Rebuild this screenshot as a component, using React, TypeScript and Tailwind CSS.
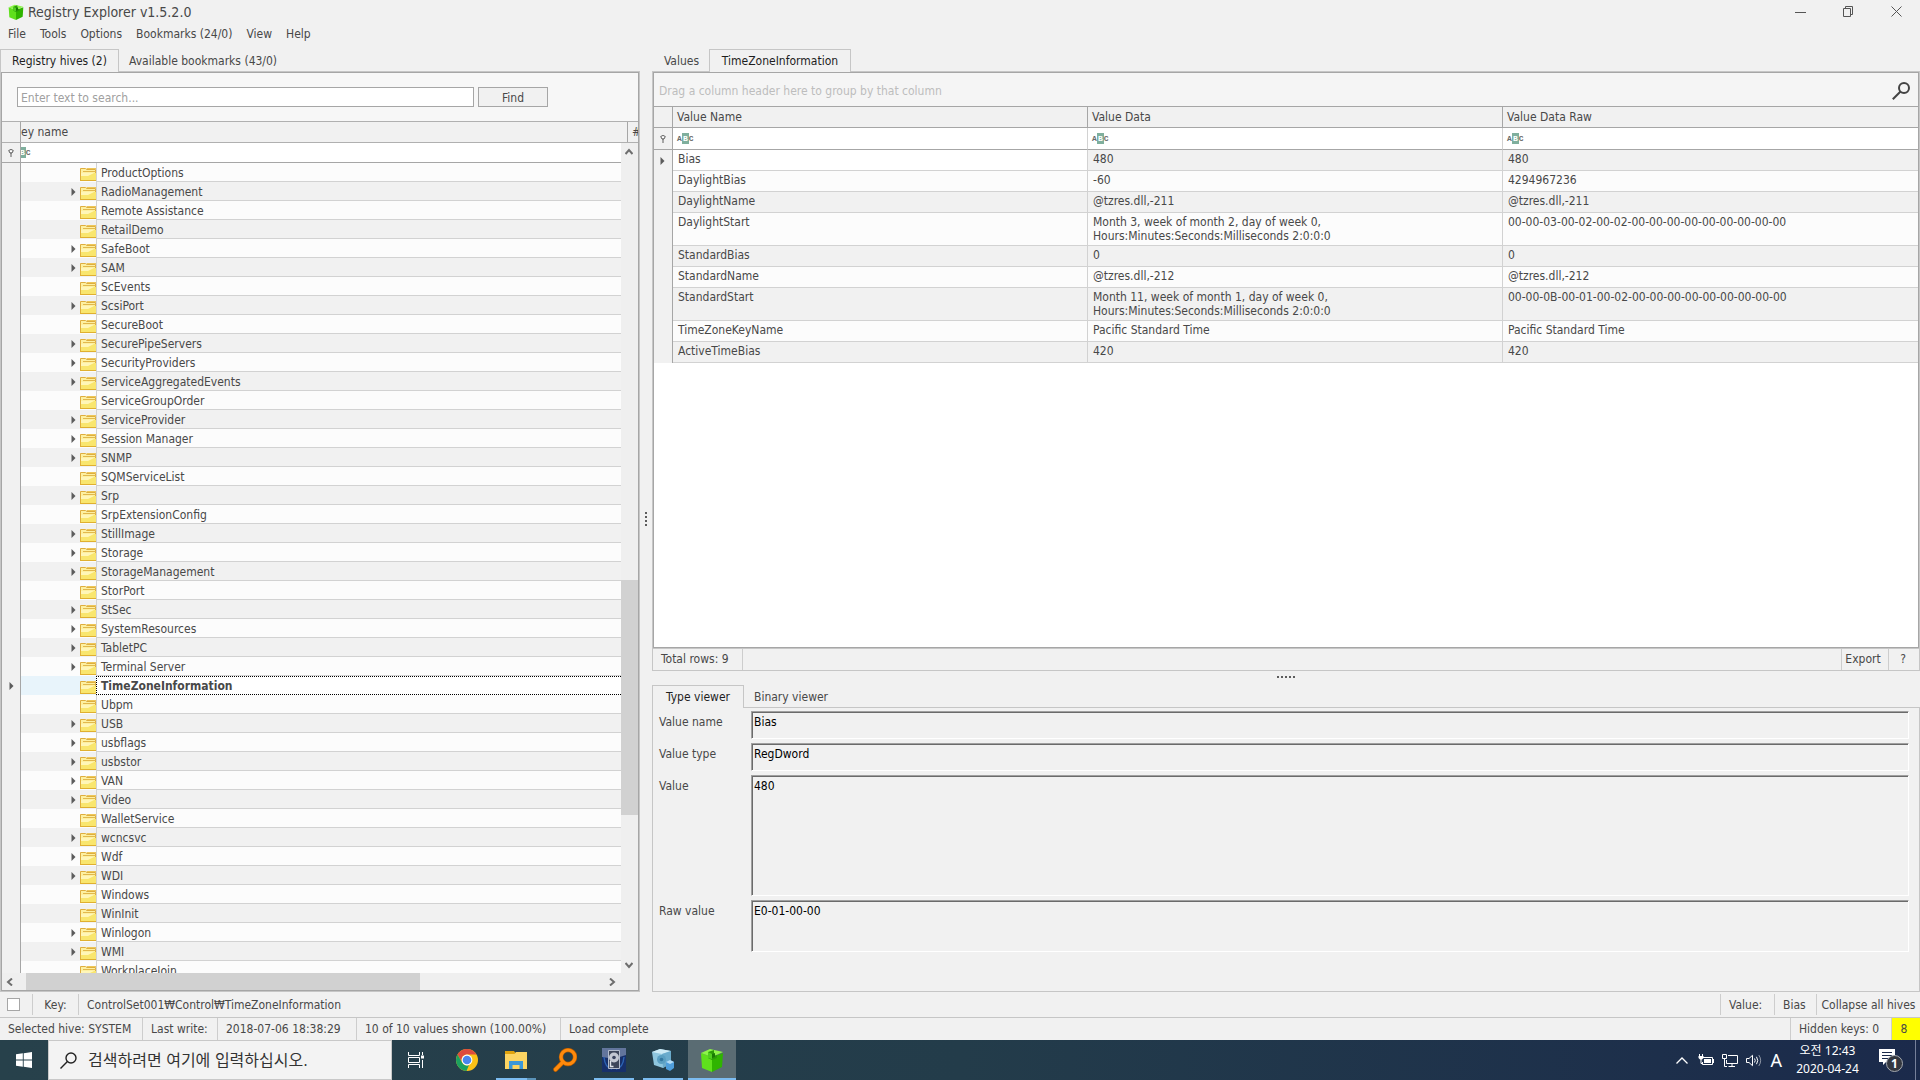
import type { ReactNode } from 'react'

type TreeKey = { name: string; hasChildren?: boolean; selected?: boolean }

const treeKeys: TreeKey[] = [
  { name: 'ProductOptions' },
  { name: 'RadioManagement', hasChildren: true },
  { name: 'Remote Assistance' },
  { name: 'RetailDemo' },
  { name: 'SafeBoot', hasChildren: true },
  { name: 'SAM', hasChildren: true },
  { name: 'ScEvents' },
  { name: 'ScsiPort', hasChildren: true },
  { name: 'SecureBoot' },
  { name: 'SecurePipeServers', hasChildren: true },
  { name: 'SecurityProviders', hasChildren: true },
  { name: 'ServiceAggregatedEvents', hasChildren: true },
  { name: 'ServiceGroupOrder' },
  { name: 'ServiceProvider', hasChildren: true },
  { name: 'Session Manager', hasChildren: true },
  { name: 'SNMP', hasChildren: true },
  { name: 'SQMServiceList' },
  { name: 'Srp', hasChildren: true },
  { name: 'SrpExtensionConfig' },
  { name: 'StillImage', hasChildren: true },
  { name: 'Storage', hasChildren: true },
  { name: 'StorageManagement', hasChildren: true },
  { name: 'StorPort' },
  { name: 'StSec', hasChildren: true },
  { name: 'SystemResources', hasChildren: true },
  { name: 'TabletPC', hasChildren: true },
  { name: 'Terminal Server', hasChildren: true },
  { name: 'TimeZoneInformation', selected: true },
  { name: 'Ubpm' },
  { name: 'USB', hasChildren: true },
  { name: 'usbflags', hasChildren: true },
  { name: 'usbstor', hasChildren: true },
  { name: 'VAN', hasChildren: true },
  { name: 'Video', hasChildren: true },
  { name: 'WalletService' },
  { name: 'wcncsvc', hasChildren: true },
  { name: 'Wdf', hasChildren: true },
  { name: 'WDI', hasChildren: true },
  { name: 'Windows' },
  { name: 'WinInit' },
  { name: 'Winlogon', hasChildren: true },
  { name: 'WMI', hasChildren: true },
  { name: 'WorkplaceJoin' },
]

const columns = ['Value Name', 'Value Data', 'Value Data Raw']

const values = [
  ['Bias', '480', '480'],
  ['DaylightBias', '-60', '4294967236'],
  ['DaylightName', '@tzres.dll,-211', '@tzres.dll,-211'],
  [
    'DaylightStart',
    'Month 3, week of month 2, day of week 0,\nHours:Minutes:Seconds:Milliseconds 2:0:0:0',
    '00-00-03-00-02-00-02-00-00-00-00-00-00-00-00-00',
  ],
  ['StandardBias', '0', '0'],
  ['StandardName', '@tzres.dll,-212', '@tzres.dll,-212'],
  [
    'StandardStart',
    'Month 11, week of month 1, day of week 0,\nHours:Minutes:Seconds:Milliseconds 2:0:0:0',
    '00-00-0B-00-01-00-02-00-00-00-00-00-00-00-00-00',
  ],
  ['TimeZoneKeyName', 'Pacific Standard Time', 'Pacific Standard Time'],
  ['ActiveTimeBias', '420', '420'],
]

/* ---------- icons ---------- */

function CubeIcon({ className }: { className: string }) {
  return (
    <svg viewBox="0 0 24 24" className={className} aria-hidden="true">
      <path d="M1 5 L12 9 V24 L2 20 Z" fill="#5fe01c" />
      <path d="M12 9 L23 5 L22 19 L12 24 Z" fill="#2fb400" />
      <path d="M1 5 L10 1 L23 4 L12 9 Z" fill="#8cf548" />
      <path d="M8 4 L14 2 V8 L17 7 V10 L12 12 L8 10 Z" fill="#2a9a08" />
      <path d="M8 4 L12 6 V11 L8 10 Z" fill="#50cf1e" />
      <path d="M12 6 L15 5 V9 L12 10 Z" fill="#187a04" />
    </svg>
  )
}

function FolderIcon() {
  return (
    <svg viewBox="0 0 16 14" className="h-3.5 w-4 shrink-0" aria-hidden="true">
      <path d="M0.5 13.5 V1.5 H5.5 L6.5 2.5 H15.5 V13.5 Z" fill="#fdf0a0" stroke="#dfae3e" />
      <path d="M6.5 1.5 H16" stroke="#edc75a" />
      <path d="M3 4.5 H16" stroke="#e2b84c" />
      <path d="M1 6 H16 V13 H1 Z" fill="#f9e66e" />
      <path d="M1 6 H14 L8 9 H1 Z" fill="#fff6b8" />
      <path d="M0 13.5 H16" stroke="#e0b030" />
    </svg>
  )
}

function RowArrow() {
  return (
    <svg viewBox="0 0 5 8" className="h-2 w-[5px]" aria-hidden="true">
      <path d="M0.5 0 L4.5 4 L0.5 8 Z" fill="#5c5c5c" />
    </svg>
  )
}

function PinIcon() {
  return (
    <svg viewBox="0 0 6 8" className="h-2 w-1.5" aria-hidden="true">
      <path d="M0.7 1.5 Q3 -0.6 5.3 1.5 L4 4 H2 Z" fill="#fff" stroke="#5c5c5c" />
      <path d="M3 3.5 V8" stroke="#5c5c5c" />
    </svg>
  )
}

function AbcIcon() {
  return (
    <span className="flex h-[11px] shrink-0 items-center font-['Liberation_Mono',monospace] text-[8px] leading-none font-bold text-[#6a6a6a]">
      <span>A</span>
      <span className="flex h-[11px] w-[7px] items-center justify-center bg-[#7faf9d] text-white">B</span>
      <span>C</span>
    </span>
  )
}

function Chevron({ d }: { d: string }) {
  return (
    <svg viewBox="0 0 8 8" className="h-2 w-2" aria-hidden="true">
      <path d={d} fill="none" stroke="#6e6e6e" strokeWidth="2" />
    </svg>
  )
}

/* ---------- shared pieces ---------- */

function Tab({ children, active, className }: { children: ReactNode; active?: boolean; className: string }) {
  return (
    <button
      type="button"
      role="tab"
      aria-selected={!!active}
      className={`relative -mb-px h-[23px] whitespace-nowrap ${
        active ? 'border border-b-0 border-[#c6c6c6] bg-[#f1f1f1] text-[#1e1e1e]' : ''
      } ${className}`}
    >
      {children}
    </button>
  )
}

function Divider() {
  return <span className="w-px self-stretch bg-[#cdcdcd]" />
}

function Field({ id, label, value, className }: { id: string; label: string; value: string; className: string }) {
  return (
    <div className="flex">
      <label htmlFor={id} className="w-[92px] shrink-0 pt-1">
        {label}
      </label>
      <textarea
        id={id}
        readOnly
        defaultValue={value}
        className={`block min-w-0 flex-1 resize-none border border-t-[#a0a0a0] border-r-white border-b-white border-l-[#a0a0a0] bg-[#f1f1f1] px-0.5 pt-[3px] text-black inset-shadow-[1px_1px_0_#6b6b6b] outline-none ${className}`}
      />
    </div>
  )
}

/* ---------- window ---------- */

function TitleBar() {
  return (
    <header className="flex h-[23px] items-center pl-2">
      <CubeIcon className="h-4 w-4" />
      <h1 className="ml-1 flex-1 text-[14px]">Registry Explorer v1.5.2.0</h1>
      <button type="button" aria-label="Minimize" className="flex h-6 w-12 items-center justify-center">
        <svg viewBox="0 0 11 11" className="h-[11px] w-[11px]">
          <path d="M0 6.5 H11" stroke="#555" />
        </svg>
      </button>
      <button type="button" aria-label="Restore" className="flex h-6 w-12 items-center justify-center">
        <svg viewBox="0 0 11 11" className="h-[11px] w-[11px]" fill="none" stroke="#555">
          <path d="M0.5 2.5 H7.5 V10.5 H0.5 Z M2.5 2.5 V0.5 H9.5 V8.5 H7.5" />
        </svg>
      </button>
      <button type="button" aria-label="Close" className="flex h-6 w-12 items-center justify-center">
        <svg viewBox="0 0 11 11" className="h-[11px] w-[11px]">
          <path d="M0.5 0.5 L10.5 10.5 M10.5 0.5 L0.5 10.5" stroke="#555" />
        </svg>
      </button>
    </header>
  )
}

function MenuBar() {
  return (
    <nav className="flex h-[26px] items-center gap-3.5 pb-1 pl-2">
      {['File', 'Tools', 'Options', 'Bookmarks (24/0)', 'View', 'Help'].map((item) => (
        <button key={item} type="button">
          {item}
        </button>
      ))}
    </nav>
  )
}

function TreeRow({ item, index }: { item: TreeKey; index: number }) {
  const bg = index % 2 ? 'bg-[#f1f1f1]' : 'bg-[#fcfcfc]'
  return (
    <li className="flex h-[19px] shrink-0">
      <span className="flex w-[19px] shrink-0 items-center justify-center border-r border-[#a6a6a6] bg-[#f1f1f1]">
        {item.selected && <RowArrow />}
      </span>
      <span className={`flex w-[75px] shrink-0 items-center justify-end ${item.selected ? 'bg-[#e8f4fb]' : bg}`}>
        {item.hasChildren && <RowArrow />}
        <span className="ml-1 pt-[3px]">
          <FolderIcon />
        </span>
      </span>
      {item.selected ? (
        <span className="flex flex-1 items-center border border-r-0 border-dotted border-black bg-white pl-1 font-bold">
          {item.name}
        </span>
      ) : (
        <span className={`flex flex-1 items-center border-b border-l border-[#d2d2d2] pt-0.5 pl-1 ${bg}`}>
          {item.name}
        </span>
      )}
    </li>
  )
}

function HivesPanel() {
  return (
    <section className="flex w-1/3 flex-col">
      <div role="tablist" className="flex h-[22px] shrink-0">
        <Tab active className="w-[119px]">
          Registry hives (2)
        </Tab>
        <Tab className="px-2.5">Available bookmarks (43/0)</Tab>
      </div>
      <div className="flex min-h-0 flex-1 border border-[#c6c6c6]">
        <div className="flex min-w-0 flex-1 flex-col border border-[#a6a6a6]">
          <div className="flex h-12 shrink-0 items-center gap-1 bg-[#f7f7f7] pr-[90px] pl-[15px]">
            <input
              type="text"
              aria-label="Search keys"
              placeholder="Enter text to search..."
              className="h-5 min-w-0 flex-1 border border-[#a6a6a6] bg-white px-[3px] pt-0.5 outline-none placeholder:text-[#a0a0a0]"
            />
            <button type="button" className="h-5 w-[70px] border border-[#a6a6a6] bg-[#f1f1f1] pt-0.5">
              Find
            </button>
          </div>
          <div className="flex h-[22px] shrink-0 border-y border-[#b0b0b0]">
            <span className="w-[19px] border-r border-[#a6a6a6]" />
            <span className="flex flex-1 items-center">ey name</span>
            <span className="flex w-[11px] items-center overflow-hidden border-l border-[#a6a6a6] pl-1">#</span>
          </div>
          <div className="flex min-h-0 flex-1">
            <div className="flex min-w-0 flex-1 flex-col">
              <div className="flex h-5 shrink-0 border-b border-[#a6a6a6]">
                <span className="flex w-[19px] items-center justify-center border-r border-[#a6a6a6]">
                  <PinIcon />
                </span>
                <div className="flex flex-1 items-center overflow-hidden bg-white">
                  <span className="-ml-[7px]">
                    <AbcIcon />
                  </span>
                  <input type="text" aria-label="Filter key name" className="h-full min-w-0 flex-1 outline-none" />
                </div>
              </div>
              <ul className="flex min-h-0 flex-1 flex-col overflow-hidden">
                {treeKeys.map((item, i) => (
                  <TreeRow key={item.name} item={item} index={i} />
                ))}
              </ul>
            </div>
            <div className="flex w-[17px] shrink-0 flex-col items-center bg-[#efefef]">
              <span className="flex h-[17px] items-center">
                <Chevron d="M0.5 6 L4 2 L7.5 6" />
              </span>
              <div className="flex w-full flex-1 flex-col">
                <span className="grow-[420]" />
                <span className="w-full grow-[235] bg-[#d1d1d1]" />
                <span className="grow-[141]" />
              </div>
              <span className="flex h-[17px] items-center">
                <Chevron d="M0.5 2 L4 6 L7.5 2" />
              </span>
            </div>
          </div>
          <div className="flex h-[17px] shrink-0 bg-[#efefef] pr-[17px]">
            <span className="flex w-6 items-center pl-1">
              <Chevron d="M6 0.5 L2 4 L6 7.5" />
            </span>
            <span className="grow-[394] bg-[#d1d1d1]" />
            <span className="grow-[184]" />
            <span className="flex w-[17px] items-center justify-center">
              <Chevron d="M2 0.5 L6 4 L2 7.5" />
            </span>
          </div>
        </div>
      </div>
    </section>
  )
}

function ValuesTable() {
  return (
    <table className="w-full table-fixed border-separate border-spacing-0 text-left">
      <thead>
        <tr className="h-[21px]">
          <th className="w-[19px] border-r border-b border-[#a6a6a6] bg-[#f1f1f1] p-0" />
          {columns.map((c, i) => (
            <th
              key={c}
              className={`border-b border-[#a6a6a6] bg-[#f1f1f1] px-1 py-0 font-normal ${i < 2 ? 'border-r' : ''}`}
            >
              {c}
            </th>
          ))}
        </tr>
        <tr className="h-[22px]">
          <td className="border-r border-b border-[#a6a6a6] bg-[#f1f1f1] p-0">
            <span className="flex justify-center">
              <PinIcon />
            </span>
          </td>
          {columns.map((c, i) => (
            <td
              key={c}
              className={`border-b border-[#a6a6a6] border-r-[#d2d2d2] bg-white px-1 py-0 ${i < 2 ? 'border-r' : ''}`}
            >
              <div className="flex items-center">
                <AbcIcon />
                <input type="text" aria-label={`Filter ${c}`} className="h-4 min-w-0 flex-1 outline-none" />
              </div>
            </td>
          ))}
        </tr>
      </thead>
      <tbody>
        {values.map((row, r) => (
          <tr key={row[0]} className={`h-[21px] ${r % 2 ? 'bg-[#fcfcfc]' : 'bg-[#f1f1f1]'}`}>
            <td className="border-r border-[#a6a6a6] bg-[#f1f1f1] p-0">
              {r === 0 && (
                <span className="flex justify-center">
                  <RowArrow />
                </span>
              )}
            </td>
            {row.map((cell, c) => (
              <td
                key={c}
                className={`border-b border-[#d2d2d2] px-[5px] py-0.5 align-top leading-[14px] whitespace-pre ${
                  c < 2 ? 'border-r' : ''
                } ${r === 0 && c === 0 ? 'bg-white' : ''}`}
              >
                {cell}
              </td>
            ))}
          </tr>
        ))}
      </tbody>
    </table>
  )
}

function DetailPanel() {
  return (
    <section className="flex min-w-0 flex-1 flex-col">
      <div role="tablist" className="flex h-[22px] shrink-0">
        <Tab className="w-[57px] pl-0.5">Values</Tab>
        <Tab active className="w-[142px]">
          TimeZoneInformation
        </Tab>
      </div>
      <div className="flex min-h-0 flex-1 border border-[#c6c6c6]">
        <div className="min-w-0 flex-1 border border-[#a6a6a6] bg-white">
          <div className="flex h-[34px] items-center justify-between border-b border-[#a6a6a6] bg-[#f5f5f5] pt-0.5 pr-2 pl-[5px] text-[#bdbdbd]">
            Drag a column header here to group by that column
            <button type="button" aria-label="Find">
              <svg viewBox="0 0 18 18" className="h-[18px] w-[18px]" fill="none" stroke="#444">
                <circle cx="12" cy="6" r="5" strokeWidth="2" />
                <path d="M8.5 9.5 L0.8 17.3" strokeWidth="2" />
              </svg>
            </button>
          </div>
          <ValuesTable />
        </div>
      </div>
      <div className="flex h-[22px] shrink-0 items-center border border-t-0 border-[#c6c6c6]">
        <span className="w-[89px] pb-0.5 pl-2">Total rows: 9</span>
        <Divider />
        <span className="flex-1" />
        <Divider />
        <button type="button" className="w-[46px] pr-1 pb-0.5">
          Export
        </button>
        <Divider />
        <button type="button" className="w-[30px] pr-0.5 pb-0.5">
          ?
        </button>
      </div>
      <div className="flex h-3.5 shrink-0 items-center justify-center gap-0.5 pb-[3px]">
        {[0, 1, 2, 3, 4].map((n) => (
          <span key={n} className="h-0.5 w-0.5 bg-[#5c5c5c]" />
        ))}
      </div>
      <div role="tablist" className="flex h-[22px] shrink-0">
        <Tab active className="w-[92px]">
          Type viewer
        </Tab>
        <Tab className="px-2.5">Binary viewer</Tab>
      </div>
      <div className="flex h-[285px] shrink-0 flex-col gap-1 border border-[#c6c6c6] pt-[3px] pr-2.5 pl-1.5">
        <Field id="value-name" label="Value name" value="Bias" className="h-7" />
        <Field id="value-type" label="Value type" value="RegDword" className="h-7" />
        <Field id="value" label="Value" value="480" className="h-[121px]" />
        <Field id="raw-value" label="Raw value" value="E0-01-00-00" className="h-[52px]" />
      </div>
    </section>
  )
}

function StatusBars() {
  return (
    <footer className="shrink-0">
      <div className="flex h-[26px] items-center border-b border-[#c6c6c6] py-0.5">
        <input
          type="checkbox"
          aria-label="Lock key"
          className="mx-[7px] h-[13px] w-[13px] appearance-none border border-[#a6a6a6] bg-white"
        />
        <span className="w-[5px]" />
        <Divider />
        <span className="w-[45px] text-center">Key:</span>
        <Divider />
        <span className="flex-1 pl-2">ControlSet001₩Control₩TimeZoneInformation</span>
        <Divider />
        <span className="w-[53px] pl-2">Value:</span>
        <Divider />
        <span className="w-[41px] pl-2">Bias</span>
        <Divider />
        <button type="button" className="w-[103px] whitespace-nowrap">
          Collapse all hives
        </button>
      </div>
      <div className="flex h-[22px] items-center whitespace-nowrap">
        <span className="w-[142px] pl-2">Selected hive: SYSTEM</span>
        <Divider />
        <span className="w-[74px] pl-2">Last write:</span>
        <Divider />
        <span className="w-[138px] pl-2">2018-07-06 18:38:29</span>
        <Divider />
        <span className="w-[203px] pl-2">10 of 10 values shown (100.00%)</span>
        <Divider />
        <span className="flex-1 pl-2">Load complete</span>
        <Divider />
        <span className="w-[100px] pl-2">Hidden keys: 0</span>
        <Divider />
        <span className="flex h-full w-7 items-center justify-center bg-[#ffff00] pr-1">8</span>
      </div>
    </footer>
  )
}

/* ---------- taskbar ---------- */

function TaskButton({ label, active, bar, children }: { label: string; active?: boolean; bar?: string; children: ReactNode }) {
  return (
    <button
      type="button"
      aria-label={label}
      className={`flex h-10 w-12 flex-col items-center ${active ? 'bg-[#5a6c73]' : ''}`}
    >
      <span className="flex flex-1 items-center pt-0.5">{children}</span>
      <span className={`h-0.5 ${bar ?? ''}`} />
    </button>
  )
}

function Taskbar() {
  return (
    <div className="flex h-10 shrink-0 bg-linear-to-r from-[#27414b] via-[#233c4a] to-[#1b2a4b] text-white">
      <button type="button" aria-label="Start" className="flex w-12 items-center justify-center">
        <svg viewBox="0 0 16 16" className="h-4 w-4" fill="#fff">
          <path d="M0 2.3 L6.8 1.3 V7.6 H0 Z M7.7 1.2 L16 0 V7.6 H7.7 Z M0 8.4 H6.8 V14.7 L0 13.7 Z M7.7 8.4 H16 V16 L7.7 14.8 Z" />
        </svg>
      </button>
      <label className="flex w-[344px] items-center gap-[11px] border border-[#c8c8c8] bg-[#f3f3f3] pl-[11px] text-[#222]">
        <svg viewBox="0 0 17 17" className="h-[17px] w-[17px] shrink-0" fill="none" stroke="#222" strokeWidth="1.4">
          <circle cx="11" cy="6" r="5" />
          <path d="M7.4 9.6 L0.5 16.5" />
        </svg>
        <input
          type="text"
          aria-label="Search"
          placeholder="검색하려면 여기에 입력하십시오."
          className="h-full min-w-0 flex-1 text-[16px] outline-none placeholder:text-[#333]"
        />
      </label>
      <div className="flex gap-px">
        <TaskButton label="Task view">
          <svg viewBox="0 0 17 16" className="h-4 w-[17px]" fill="none" stroke="#fff">
            <path d="M0.5 0 V3.5 H11.5 V0 M0.5 16 V12.5 H11.5 V16 M0.5 5.5 H11.5 V10.5 H0.5 Z M14.5 0 V3 M14.5 8 V16" />
            <path d="M13 3.5 H16 V6.5 H13 Z" fill="#fff" stroke="none" />
          </svg>
        </TaskButton>
        <span className="w-px" />
        <TaskButton label="Chrome">
          <svg viewBox="0 0 22 22" className="h-[22px] w-[22px]">
            <circle cx="11" cy="11" r="11" fill="#fbc116" />
            <path d="M1.5 5.5 A11 11 0 0 1 20.5 5.5 H11 A5.5 5.5 0 0 0 6.2 13.7 Z" fill="#dd4b3e" />
            <path d="M1.5 5.5 L6.2 13.7 A5.5 5.5 0 0 0 13 16 L10.5 22 A11 11 0 0 1 1.5 5.5 Z" fill="#1ba05f" />
            <circle cx="11" cy="11" r="5.4" fill="#fff" />
            <circle cx="11" cy="11" r="4.3" fill="#4a86ee" />
          </svg>
        </TaskButton>
        <TaskButton label="File Explorer" bar="w-10 border-r-[9px] border-[#5b93b8] bg-[#7cbcf0]">
          <svg viewBox="0 0 22 18" className="h-[18px] w-[22px]">
            <path d="M0 0 H9 L10.5 2 H22 V18 H0 Z" fill="#e0a30e" />
            <path d="M0 3 H9.5 L11 1 H22 V18 H0 Z" fill="#fcd462" />
            <path d="M4 18 V10 H18 V18 H14.5 V14 H7.5 V18 Z" fill="#3b97d8" />
          </svg>
        </TaskButton>
        <TaskButton label="Everything">
          <svg viewBox="0 0 24 24" className="h-6 w-6" fill="none" strokeLinecap="round">
            <path d="M2.5 21.5 L10 14" stroke="#b35a00" strokeWidth="4.6" />
            <circle cx="15" cy="9" r="7" stroke="#b35a00" strokeWidth="4.4" />
            <path d="M2.5 21.5 L10 14" stroke="#ff8a0c" strokeWidth="3.2" />
            <circle cx="15" cy="9" r="7" stroke="#ff8a0c" strokeWidth="3.2" />
          </svg>
        </TaskButton>
        <TaskButton label="Disk tool" bar="w-10 bg-[#7cbcf0]">
          <svg viewBox="0 0 24 24" className="h-6 w-6">
            <path d="M0 0 H24 V24 H0 Z" fill="#17306a" />
            <path d="M0 0 H24 V7 Q12 12 0 9 Z" fill="#62759c" />
            <path d="M2 9 Q3 20 10 21 M22 9 Q21 20 14 21" fill="none" stroke="#2c64b4" strokeWidth="1.4" />
            <path d="M6.5 2.5 H17.5 V20.5 H6.5 Z" fill="#3d465a" stroke="#b4bdcc" />
            <circle cx="12" cy="9.5" r="5" fill="#c3c8d2" />
            <circle cx="12" cy="9.5" r="1.8" fill="#39435c" />
            <path d="M8.5 13 V18.5 H11.5" fill="none" stroke="#dfe3ea" strokeWidth="1.4" />
          </svg>
        </TaskButton>
        <TaskButton label="Imager" bar="w-10 bg-[#7cbcf0]">
          <svg viewBox="0 0 22 22" className="h-[22px] w-[22px]">
            <path d="M0 3 L8 0 L19 2 V14 L11 19 L2 16 Z" fill="#8fc6de" />
            <path d="M0 3 L8 0 L19 2 L10 5 Z" fill="#cdeaf5" />
            <path d="M10 5 L19 2 V14 L11 19 Z" fill="#6aabcc" />
            <circle cx="9.5" cy="10.5" r="4.5" fill="#5a9fc2" />
            <circle cx="9.5" cy="10.5" r="1.8" fill="#3478a0" />
            <path d="M14 13 L18 11 L22 13 V19 L18 22 L14 20 Z" fill="#4f9edb" />
            <path d="M14 13 L18 11 L22 13 L18 15 Z" fill="#b3dcf5" />
          </svg>
        </TaskButton>
        <TaskButton label="Registry Explorer" active bar="w-12 bg-[#7cbcf0]">
          <CubeIcon className="h-6 w-6" />
        </TaskButton>
      </div>
      <div className="ml-auto flex items-center">
        <div className="flex items-center gap-2">
          <svg viewBox="0 0 12 7" className="mr-0.5 h-[7px] w-3" fill="none" stroke="#fff" strokeWidth="1.3">
            <path d="M0.5 6.5 L6 1 L11.5 6.5" />
          </svg>
          <svg viewBox="0 0 16 12" className="h-3 w-4" fill="none" stroke="#fff">
            <path d="M5 3.5 H14.5 V10.5 H4.5 V8" />
            <path d="M6 5 H13 V9 H6 Z" fill="#fff" stroke="none" />
            <path d="M15.5 5 V9 M1.5 0 V2 M4.5 0 V2 M3 5 V9.5 H5" />
            <path d="M0.5 2 H5.5 V4 L4 5.5 H2 L0.5 4 Z" fill="#fff" stroke="none" />
          </svg>
          <svg viewBox="0 0 16 13" className="h-[13px] w-4" fill="none" stroke="#fff">
            <path d="M6 1.5 H15.5 V9.5 H4.5 V6 M10 9.5 V12.5 M6.5 12.5 H13" />
            <path d="M0.5 0.5 H4.5 V4.5 H0.5 Z M2.5 4.5 V12.5 H5" />
          </svg>
          <svg viewBox="0 0 16 13" className="h-[13px] w-4" fill="none" stroke="#fff">
            <path d="M0.5 4.5 H3 L6.5 1.3 V11.7 L3 8.5 H0.5 Z M8.5 4.5 Q10 6.5 8.5 8.5 M10.5 2.8 Q13 6.5 10.5 10.2" />
            <path d="M12.8 1 Q16.5 6.5 12.8 12" opacity="0.5" />
          </svg>
          <span className="font-['Noto_Sans',sans-serif] text-[18px]">A</span>
        </div>
        <div className="flex w-[91px] flex-col text-center font-['Noto_Sans','Noto_Sans_CJK_KR',sans-serif] text-[12px] leading-[18px]">
          <span>오전 12:43</span>
          <span>2020-04-24</span>
        </div>
        <button type="button" aria-label="Notifications" className="mr-2.5 ml-1.5 h-10 w-[26px]">
          <svg viewBox="0 0 26 26" className="mt-1 h-[26px] w-[26px] overflow-visible">
            <path d="M0 0 H16 V13 H7 L4 16 V13 H0 Z" fill="#fff" />
            <path d="M3 3.5 H13 M3 6.5 H13 M3 9.5 H10" stroke="#1b2a4b" />
            <circle cx="15.5" cy="14.5" r="8" fill="#33373f" stroke="#a5a9b0" />
            <text x="15.5" y="19" textAnchor="middle" fill="#fff" fontSize="12" fontWeight="bold" fontFamily="Noto Sans">
              1
            </text>
          </svg>
        </button>
        <span className="mr-1 h-10 w-px bg-[#76809a]" />
      </div>
    </div>
  )
}

export default function App() {
  return (
    <div className="flex h-screen flex-col overflow-hidden bg-[#f1f1f1] font-['DejaVu_Sans_Condensed','Noto_Sans_CJK_KR',sans-serif] text-[12px] leading-[14px] text-[#484848]">
      <TitleBar />
      <MenuBar />
      <main className="flex min-h-0 flex-1">
        <HivesPanel />
        <div className="flex w-3 shrink-0 flex-col items-center justify-center gap-0.5 pb-1">
          {[0, 1, 2, 3].map((n) => (
            <span key={n} className="h-0.5 w-0.5 bg-[#5c5c5c]" />
          ))}
        </div>
        <DetailPanel />
      </main>
      <StatusBars />
      <Taskbar />
    </div>
  )
}
